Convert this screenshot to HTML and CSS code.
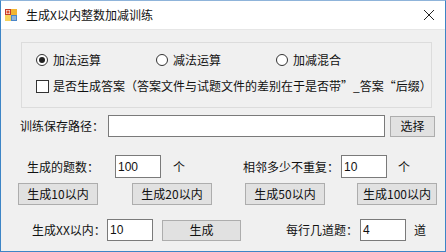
FILE: index.html
```html
<!DOCTYPE html>
<html>
<head>
<meta charset="utf-8">
<link rel="stylesheet" href="styles.css">
</head>
<body>
<div class="window">
  <div class="titlebar">
    <svg class="appicon" width="12" height="12" viewBox="0 0 12 12">
      <rect x="0.5" y="0.5" width="5" height="5" fill="#fff" stroke="#c43c2a"/>
      <rect x="1.5" y="1.5" width="3" height="3" fill="#e0522f"/>
      <rect x="6" y="0" width="6" height="6" fill="#f2b632"/>
      <rect x="0" y="6" width="6" height="6" fill="#f6d25a"/>
      <rect x="6" y="6" width="6" height="6" fill="#4a86c8"/>
      <rect x="7" y="7" width="4" height="4" fill="#8fb4dc"/>
    </svg>
    <span class="title">生成X以内整数加减训练</span>
    <svg class="close" width="12" height="12" viewBox="0 0 12 12">
      <path d="M1 1 L11 11 M11 1 L1 11" stroke="#222" stroke-width="1" fill="none"/>
    </svg>
  </div>
  <div class="client">
    <div class="group">
      <div class="radios">
        <div class="radio"><span class="circle checked"></span><span>加法运算</span></div>
        <div class="radio"><span class="circle"></span><span>减法运算</span></div>
        <div class="radio"><span class="circle"></span><span>加减混合</span></div>
      </div>
      <div class="check"><span class="box"></span><span>是否生成答案（答案文件与试题文件的差别在于是否带”_答案“后缀）</span></div>
    </div>
    <div class="row row-path">
      <span class="lbl lbl-path">训练保存路径：</span>
      <span class="input input-path"></span>
      <span class="btn btn-select">选择</span>
    </div>
    <div class="row row-count">
      <span class="lbl lbl-count">生成的题数：</span>
      <span class="input input-small">100</span>
      <span class="unit unit-first">个</span>
      <span class="lbl lbl-norep">相邻多少不重复：</span>
      <span class="input input-small">10</span>
      <span class="unit unit-second">个</span>
    </div>
    <div class="row row-btns">
      <span class="btn btn-gen">生成10以内</span>
      <span class="btn btn-gen">生成20以内</span>
      <span class="btn btn-gen">生成50以内</span>
      <span class="btn btn-gen">生成100以内</span>
    </div>
    <div class="row row-last">
      <span class="lbl lbl-xx">生成XX以内：</span>
      <span class="input input-small">10</span>
      <span class="btn btn-make">生成</span>
      <span class="lbl lbl-per">每行几道题：</span>
      <span class="input input-small">4</span>
      <span class="unit">道</span>
    </div>
  </div>
</div>
</body>
</html>
```
FILE: styles.css
```css
* { box-sizing: border-box; }
html, body { margin: 0; padding: 0; }
body {
  width: 446px; height: 252px; overflow: hidden;
  font-family: "Noto Sans CJK SC", "Liberation Sans", sans-serif;
  font-size: 12px; color: #111;
}
.window {
  width: 446px; height: 252px;
  border: 1px solid #3d85c6;
  border-top-color: #8fb4da;
  display: flex; flex-direction: column;
  background: #f0f0f0;
}
.titlebar {
  height: 29px; background: #fff;
  display: flex; align-items: center;
  padding: 0 0 1px 4px;
  border-bottom: 1px solid #e6e6e6;
}
.appicon { flex: none; }
.title { margin-left: 9px; font-size: 12px; line-height: 16px; }
.close { margin-left: auto; margin-right: 10px; }
.client { flex: 1; display: flex; flex-direction: column; }
.group {
  margin: 12px 0 0 20px;
  width: 411px; height: 66px;
  border: 1px solid #dcdcdc;
  padding: 10px 0 0 14px;
}
.radios { display: flex; height: 13px; align-items: center; }
.radio { width: 120px; display: flex; align-items: center; line-height: 14px; }
.circle {
  width: 12px; height: 12px; border-radius: 50%;
  border: 1px solid #333; background: #fff;
  margin-right: 5px; flex: none; position: relative;
}
.circle.checked::after {
  content: ""; position: absolute; left: 2px; top: 2px;
  width: 6px; height: 6px; border-radius: 50%; background: #222;
}
.check { display: flex; align-items: center; margin-top: 13px; line-height: 14px; }
.box {
  width: 13px; height: 13px; border: 1px solid #333; background: #fff;
  margin-right: 4px; flex: none;
}
.row { display: flex; align-items: center; }
.row > * { flex: none; }
.lbl { line-height: 14px; white-space: nowrap; }
.input {
  background: #fff; border: 1px solid #7a7a7a;
  height: 22px; display: flex; align-items: center;
  padding-left: 2px; font-family: "Liberation Sans", sans-serif; font-size: 12px;
}
.btn {
  background: #e1e1e1; border: 1px solid #adadad;
  height: 22px; display: flex; align-items: center; justify-content: center;
  line-height: 14px; white-space: nowrap;
}
.unit { line-height: 14px; }

.row-path { margin-top: 7px; height: 22px; }
.lbl-path { margin-left: 19px; width: 88px; }
.input-path { width: 277px; }
.btn-select { margin-left: 5px; width: 45px; height: 21px; }

.row-count { margin-top: 18px; height: 23px; }
.lbl-count { margin-left: 26px; width: 88px; }
.input-small { width: 46px; height: 23px; }
.unit-first { margin-left: 12px; width: 70px; }
.unit-second { margin-left: 11px; }
.lbl-norep { width: 98px; }

.row-btns { margin-top: 5px; height: 22px; }
.btn-gen { width: 80px; height: 22px; }
.btn-gen:nth-child(1) { margin-left: 17px; }
.btn-gen:nth-child(2) { margin-left: 34px; }
.btn-gen:nth-child(3) { margin-left: 33px; }
.btn-gen:nth-child(4) { margin-left: 32px; }

.row-last { margin-top: 14px; height: 22px; }
.lbl-xx { margin-left: 31px; width: 75px; }
.row-last .input-small { height: 22px; }
.btn-make { margin-left: 9px; width: 79px; height: 21px; }
.lbl-per { margin-left: 45px; width: 74px; }
.row-last .unit { margin-left: 8px; }
```
